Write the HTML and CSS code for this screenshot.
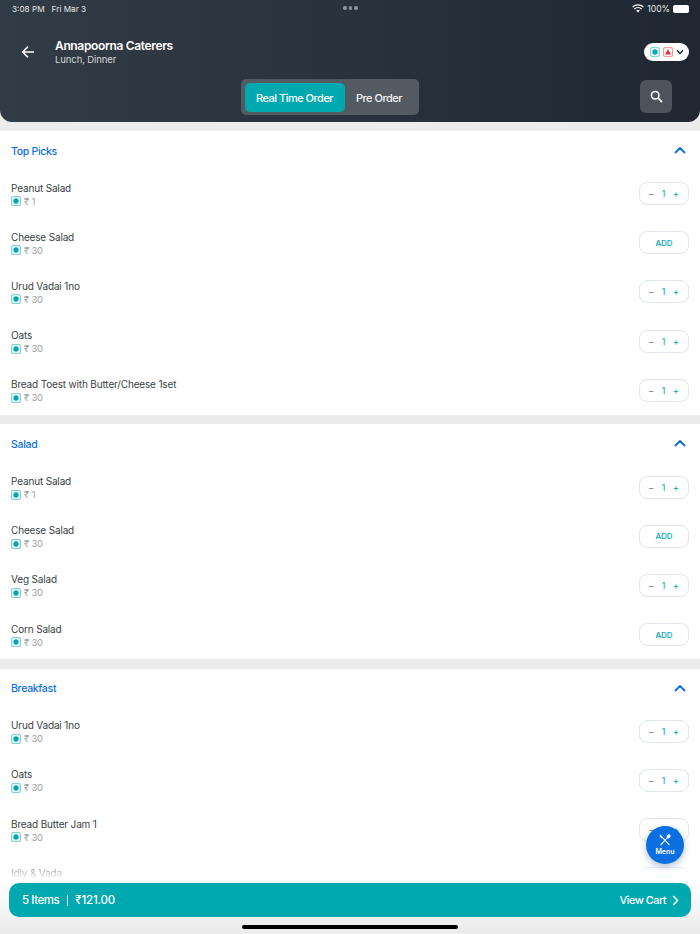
FILE: index.html
```html
<!DOCTYPE html>
<html lang="en">
<head>
<meta charset="utf-8">
<title>Annapoorna Caterers</title>
<link rel="stylesheet" href="styles.css">
</head>
<body>
<div class="app">
  <svg width="0" height="0" class="defs" aria-hidden="true">
    <symbol id="veg" viewBox="0 0 10 10"><rect x="0.6" y="0.6" width="8.8" height="8.8" rx="1.6" fill="#fff" stroke="#7fd3d7" stroke-width="1.2"/><circle cx="5" cy="5" r="2.7" fill="#00a8b0"/></symbol>
    <symbol id="up" viewBox="0 0 12 8"><path d="M1.5 6.5 6 2l4.5 4.5" fill="none" stroke="#0a6fe0" stroke-width="1.8" stroke-linecap="round" stroke-linejoin="round"/></symbol>
  </svg>
  <header class="top">
    <div class="status">
      <div class="status-left"><span>3:08 PM</span><span>Fri Mar 3</span></div>
      <div class="dots"><i></i><i></i><i></i></div>
      <div class="status-right">
        <svg width="12" height="9" viewBox="0 0 12 9"><path d="M0.6 3a8 8 0 0 1 10.8 0M2.4 5a5.3 5.3 0 0 1 7.2 0" fill="none" stroke="#fff" stroke-width="1.3"/><path d="M4.2 6.6a2.6 2.6 0 0 1 3.6 0L6 8.6z" fill="#fff"/></svg>
        <span>100%</span>
        <span class="battery"></span>
      </div>
    </div>
    <div class="title-row">
      <svg class="back" width="14" height="14" viewBox="0 0 14 14"><path d="M13 7H2M7 1.6 1.6 7 7 12.4" fill="none" stroke="#fff" stroke-width="1.5"/></svg>
      <div class="title-text">
        <div class="title">Annapoorna Caterers</div>
        <div class="subtitle">Lunch, Dinner</div>
      </div>
      <div class="filter">
        <svg width="10" height="10" viewBox="0 0 10 10"><use href="#veg"/></svg>
        <svg width="10" height="10" viewBox="0 0 10 10"><rect x="0.6" y="0.6" width="8.8" height="8.8" rx="1.2" fill="#fff" stroke="#ef9a9f" stroke-width="1.2"/><path d="M5 2.2 8 7.4H2z" fill="#e0303a"/></svg>
        <svg width="8" height="6" viewBox="0 0 8 6"><path d="M1 1.2 4 4.4l3-3.2" fill="none" stroke="#1d2630" stroke-width="1.4"/></svg>
      </div>
    </div>
    <div class="tab-row">
      <div class="tabs">
        <div class="tab tab-on">Real Time Order</div>
        <div class="tab">Pre Order</div>
      </div>
      <div class="search">
        <svg width="13" height="13" viewBox="0 0 14 14"><circle cx="5.6" cy="5.6" r="4.1" fill="none" stroke="#fff" stroke-width="1.6"/><path d="m8.6 8.6 4.4 4.4" stroke="#fff" stroke-width="1.9"/></svg>
      </div>
    </div>
  </header>

  <section class="section">
    <div class="section-head"><span>Top Picks</span><svg width="12" height="8" viewBox="0 0 12 8"><use href="#up"/></svg></div>
    <div class="row"><div class="item"><div class="name">Peanut Salad</div><div class="price"><svg width="10" height="10" viewBox="0 0 10 10"><use href="#veg"/></svg>₹ 1</div></div><div class="stepper"><b class="minus">−</b><b>1</b><b>+</b></div></div>
    <div class="row"><div class="item"><div class="name">Cheese Salad</div><div class="price"><svg width="10" height="10" viewBox="0 0 10 10"><use href="#veg"/></svg>₹ 30</div></div><div class="add">ADD</div></div>
    <div class="row"><div class="item"><div class="name">Urud Vadai 1no</div><div class="price"><svg width="10" height="10" viewBox="0 0 10 10"><use href="#veg"/></svg>₹ 30</div></div><div class="stepper"><b class="minus">−</b><b>1</b><b>+</b></div></div>
    <div class="row"><div class="item"><div class="name">Oats</div><div class="price"><svg width="10" height="10" viewBox="0 0 10 10"><use href="#veg"/></svg>₹ 30</div></div><div class="stepper"><b class="minus">−</b><b>1</b><b>+</b></div></div>
    <div class="row"><div class="item"><div class="name">Bread Toest with Butter/Cheese 1set</div><div class="price"><svg width="10" height="10" viewBox="0 0 10 10"><use href="#veg"/></svg>₹ 30</div></div><div class="stepper"><b class="minus">−</b><b>1</b><b>+</b></div></div>
  </section>

  <section class="section">
    <div class="section-head"><span>Salad</span><svg width="12" height="8" viewBox="0 0 12 8"><use href="#up"/></svg></div>
    <div class="row"><div class="item"><div class="name">Peanut Salad</div><div class="price"><svg width="10" height="10" viewBox="0 0 10 10"><use href="#veg"/></svg>₹ 1</div></div><div class="stepper"><b class="minus">−</b><b>1</b><b>+</b></div></div>
    <div class="row"><div class="item"><div class="name">Cheese Salad</div><div class="price"><svg width="10" height="10" viewBox="0 0 10 10"><use href="#veg"/></svg>₹ 30</div></div><div class="add">ADD</div></div>
    <div class="row"><div class="item"><div class="name">Veg Salad</div><div class="price"><svg width="10" height="10" viewBox="0 0 10 10"><use href="#veg"/></svg>₹ 30</div></div><div class="stepper"><b class="minus">−</b><b>1</b><b>+</b></div></div>
    <div class="row"><div class="item"><div class="name">Corn Salad</div><div class="price"><svg width="10" height="10" viewBox="0 0 10 10"><use href="#veg"/></svg>₹ 30</div></div><div class="add">ADD</div></div>
  </section>

  <section class="section">
    <div class="section-head"><span>Breakfast</span><svg width="12" height="8" viewBox="0 0 12 8"><use href="#up"/></svg></div>
    <div class="row"><div class="item"><div class="name">Urud Vadai 1no</div><div class="price"><svg width="10" height="10" viewBox="0 0 10 10"><use href="#veg"/></svg>₹ 30</div></div><div class="stepper"><b class="minus">−</b><b>1</b><b>+</b></div></div>
    <div class="row"><div class="item"><div class="name">Oats</div><div class="price"><svg width="10" height="10" viewBox="0 0 10 10"><use href="#veg"/></svg>₹ 30</div></div><div class="stepper"><b class="minus">−</b><b>1</b><b>+</b></div></div>
    <div class="row"><div class="item"><div class="name">Bread Butter Jam 1</div><div class="price"><svg width="10" height="10" viewBox="0 0 10 10"><use href="#veg"/></svg>₹ 30</div></div><div class="stepper"><b class="minus">−</b><b>1</b><b>+</b></div></div>
    <div class="row"><div class="item"><div class="name">Idly &amp; Vada</div><div class="price"><svg width="10" height="10" viewBox="0 0 10 10"><use href="#veg"/></svg>₹ 30</div></div><div class="add">ADD</div></div>
  </section>

  <div class="fade"></div>
  <div class="footer">
    <div class="cart">
      <div class="cart-left"><span class="count">5 Items</span><span class="sep"></span><span class="total">₹121.00</span></div>
      <div class="cart-right"><span>View Cart</span><svg width="7" height="11" viewBox="0 0 7 11"><path d="m1.2 1 4.3 4.5-4.3 4.5" fill="none" stroke="#fff" stroke-width="1.6"/></svg></div>
    </div>
    <div class="home"></div>
  </div>
  <div class="fab">
    <svg width="12" height="12" viewBox="0 0 13 13"><path d="M1.5 1.5 11 11.5M11.5 1.5 2 11.5" stroke="#fff" stroke-width="1.2" stroke-linecap="round"/><ellipse cx="10.4" cy="2.6" rx="1.8" ry="2.3" transform="rotate(42 10.4 2.6)" fill="#fff"/><path d="M1 .6 4 3.8 2.8 5 0.6 2.2z" fill="#fff"/></svg>
    <span>Menu</span>
  </div>
</div>
</body>
</html>
```
FILE: styles.css
```css
* { box-sizing: border-box; }
html, body { margin: 0; padding: 0; }
body { font-family: Inter, "Noto Sans", sans-serif; background: #ececec; }
.app { position: relative; width: 700px; height: 934px; overflow: hidden; background: #ececec; }
.defs { position: absolute; }

.top { height: 122px; background: linear-gradient(90deg, #323c47 0%, #1f2832 100%); border-radius: 0 0 12px 12px; color: #fff; margin-bottom: 9px; }
.status { display: flex; align-items: center; justify-content: space-between; height: 17px; padding: 0 11px 0 12px; font-size: 8.2px; color: #e6e8ea; position: relative; }
.status-left { display: flex; gap: 7px; }
.status-right { display: flex; align-items: center; gap: 3px; font-size: 8.6px; }
.dots { display: flex; gap: 2px; position: absolute; left: 343px; top: 6px; }
.dots i { width: 3.5px; height: 3.5px; border-radius: 50%; background: #8d949b; }
.battery { width: 16px; height: 8px; background: #fff; border-radius: 2px; }

.title-row { display: flex; align-items: center; height: 34px; margin-top: 18px; padding: 0 11px 0 21px; }
.back { margin-right: 20px; }
.title-text { flex: 1; }
.title { font-size: 12px; font-weight: 600; line-height: 15px; letter-spacing: -0.35px; }
.subtitle { font-size: 9.5px; line-height: 13px; color: #d5d8db; letter-spacing: -0.1px; }
.filter { display: flex; align-items: center; gap: 3px; width: 45px; height: 18px; padding-left: 6px; background: #fff; border-radius: 9px; }

.tab-row { display: flex; align-items: flex-start; justify-content: space-between; margin-top: 10px; padding: 0 28px 0 241px; }
.tabs { display: flex; align-items: center; height: 36px; width: 178px; padding: 0 4px; background: #525a62; border-radius: 5px; }
.tab { font-size: 11px; line-height: 14px; font-weight: 500; letter-spacing: -0.5px; color: #f2f3f4; padding: 1px 11px 0; white-space: nowrap; }
.tab-on { display: flex; align-items: center; height: 29px; width: 100px; background: #00a8b0; border-radius: 5px; color: #fff; }
.search { display: flex; align-items: center; justify-content: center; width: 32px; height: 33px; margin-top: 1px; padding-bottom: 1px; background: #4d545c; border-radius: 6px; }

.section { background: #fff; margin-bottom: 9.5px; }
.section-head { display: flex; align-items: center; justify-content: space-between; height: 38px; padding: 0 14px 0 11px; color: #0a6fe0; font-size: 10.5px; font-weight: 500; letter-spacing: -0.3px; }
.section-head span { padding-top: 2px; }
.row { display: flex; align-items: center; justify-content: space-between; height: 49.2px; padding: 0 11px; }
.item { padding-top: 2px; }
.name { font-size: 10px; line-height: 13px; color: #3a3f45; letter-spacing: -0.16px; }
.price { display: flex; align-items: center; gap: 3px; font-size: 9.5px; line-height: 13px; color: #9b9fa3; letter-spacing: -0.2px; }
.stepper, .add { display: flex; align-items: center; width: 50px; height: 23px; border: 1px solid #dfe6ee; border-radius: 8px; background: #fff; color: #00a8b0; }
.stepper { justify-content: space-between; padding: 0 9px 0 8px; font-size: 9.5px; }
.stepper b { font-weight: 400; }
.stepper .minus { color: #7c8186; }
.add { justify-content: center; font-size: 8px; font-weight: 500; }

.fade { position: absolute; left: 0; right: 0; top: 860px; height: 22px; background: linear-gradient(180deg, rgba(255,255,255,0), #fff 85%); }
.footer { position: absolute; left: 0; right: 0; top: 882px; height: 52px; padding: 1px 9px 0; background: linear-gradient(180deg, #fff, #ececec 90%); }
.cart { display: flex; align-items: center; justify-content: space-between; height: 34px; padding: 0 12px 0 13px; background: #00a8b0; border-radius: 10px; color: #fff; font-size: 11.5px; font-weight: 500; }
.cart-left, .cart-right { display: flex; align-items: center; }
.count { letter-spacing: -0.45px; }
.total { letter-spacing: -0.2px; }
.sep { width: 1px; height: 11px; background: #fff; margin: 0 7px 0 8px; }
.cart-right { gap: 6px; font-size: 11px; letter-spacing: -0.55px; }
.home { width: 216px; height: 4px; margin: 8px auto 0; background: #000; border-radius: 2px; }
.fab { position: absolute; left: 646px; top: 826px; display: flex; flex-direction: column; align-items: center; justify-content: center; width: 38px; height: 38px; background: #0a6fe0; border-radius: 50%; color: #fff; font-size: 7px; font-weight: 600; box-shadow: 0 3px 7px rgba(10,50,110,.3); }
.fab span { line-height: 9px; margin-top: 1px; }
```
